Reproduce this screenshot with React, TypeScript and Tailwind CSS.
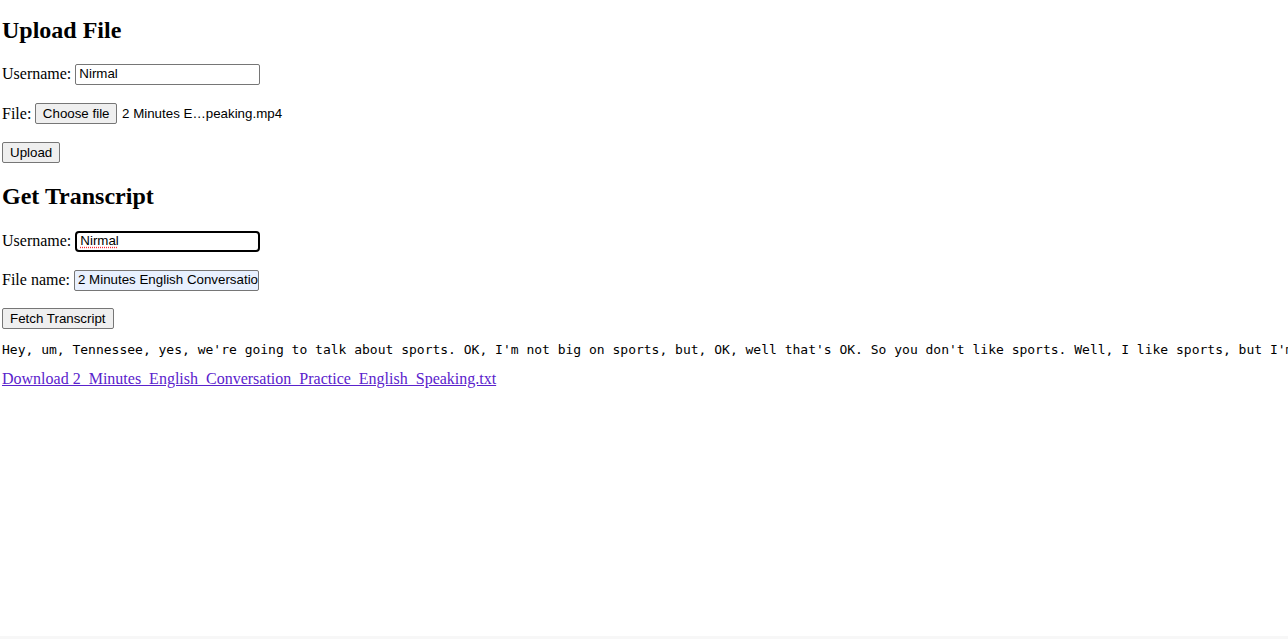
import React from 'react';

const serif = "font-['Liberation_Serif',serif]";
const sans = "font-['Liberation_Sans',Arial,sans-serif]";

const transcript =
  "Hey, um, Tennessee, yes, we're going to talk about sports. OK, I'm not big on sports, but, OK, well that's OK. So you don't like sports. Well, I like sports, but I'm not really good at them. I like to watch them on TV though.";

const Btn: React.FC<{ children: React.ReactNode; className?: string }> = ({ children, className = '' }) => (
  <button
    className={`${sans} inline-block h-[21px] px-[7px] text-[13.33px] leading-[17px] text-black bg-[#efefef] border border-[#767676] rounded-[2px] align-baseline ${className}`}
  >
    {children}
  </button>
);

const Field: React.FC<{ value: string; focused?: boolean; autofill?: boolean; spell?: boolean }> = ({
  value,
  focused,
  autofill,
  spell,
}) => (
  <span
    className={`${sans} inline-flex items-center w-[185px] h-[21px] px-[3px] text-[13.33px] text-black overflow-hidden whitespace-nowrap align-middle rounded-[2px] ${
      focused ? 'border-2 border-black rounded-[4px] px-[2px]' : 'border border-[#767676]'
    } ${autofill ? 'bg-[#e8f0fe]' : 'bg-white'}`}
  >
    <span className={spell ? 'underline decoration-dotted decoration-red-500 underline-offset-2' : ''}>{value}</span>
  </span>
);

export default function App() {
  return (
    <div className={`${serif} h-screen flex flex-col bg-white text-black overflow-hidden`}>
      <div className="flex-1 px-[2px] overflow-hidden">
        <h2 className="mt-[17px] mb-[19px] text-[24px] font-bold leading-[27px]">Upload File</h2>
        <div className="flex items-center gap-[4px] h-[22px] text-[16px]">
          <span>Username:</span>
          <Field value="Nirmal" />
        </div>
        <div className="flex items-center gap-[4px] h-[22px] mt-[17px] text-[16px]">
          <span className="mt-[1px]">File:</span>
          <Btn className="mt-[1px] !px-[6.5px]">Choose file</Btn>
          <span className={`${sans} text-[13.33px] ml-[1px] mt-[1px]`}>2 Minutes E…peaking.mp4</span>
        </div>
        <div className="flex items-center h-[22px] mt-[17px]">
          <Btn>Upload</Btn>
        </div>

        <h2 className="mt-[20px] mb-[20px] text-[24px] font-bold leading-[27px]">Get Transcript</h2>
        <div className="flex items-center gap-[4px] h-[22px] text-[16px]">
          <span>Username:</span>
          <Field value="Nirmal" focused spell />
        </div>
        <div className="flex items-center gap-[4px] h-[22px] mt-[17px] text-[16px]">
          <span>File name:</span>
          <Field value="2 Minutes English Conversation Practice English Speaking" autofill />
        </div>
        <div className="flex items-center h-[22px] mt-[16px]">
          <Btn>Fetch Transcript</Btn>
        </div>

        <pre className="mt-[13px] mb-[10px] font-['DejaVu_Sans_Mono',monospace] text-[13px] leading-[15px] whitespace-pre">
          {transcript}
        </pre>
        <a href="#" className="text-[16px] leading-[18px] text-[#5a22cc] underline">
          Download 2_Minutes_English_Conversation_Practice_English_Speaking.txt
        </a>
      </div>
      <div className="h-[3px] bg-[#f7f7f7]" />
    </div>
  );
}
